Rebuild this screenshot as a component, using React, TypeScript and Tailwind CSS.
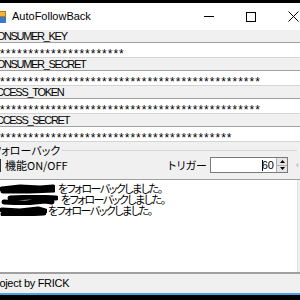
import React from "react";

const SANS = "font-['Liberation_Sans','Noto_Sans_CJK_JP',Arial,sans-serif]";
const JP = "font-['Noto_Sans_CJK_JP','Liberation_Sans',sans-serif] [font-feature-settings:'palt']";

function LabelRow({ text }: { text: string }) {
  return (
    <div className={`h-[12px] bg-[#f0f0f0] overflow-hidden leading-[12px] text-[11px] tracking-[-1.3px] text-black pl-[2px] ${SANS}`}>
      {text}
    </div>
  );
}

function ValueRow({ count }: { count: number }) {
  return (
    <div className="h-[16px] bg-white border-t border-b border-t-[#a0a0a0] border-b-[#d4d4d4] pl-[12px] overflow-hidden">
      <div className={`h-[14px] leading-[22px] text-[12px] tracking-[1px] text-black ${SANS}`}>
        {"*".repeat(count)}
      </div>
    </div>
  );
}

function Blob({ w, variant }: { w: number; variant: number }) {
  const paths = [
    "M2 5 L20 3 L40 4 L53 3 M3 7 L30 7 L54 6",
    "M10 3 L35 2 L56 3 M4 7 L25 8 L45 6 L52 7",
    "M2 4 L20 5 L38 3 L45 5 M3 8 L25 8 L44 7",
  ];
  return (
    <svg width={w} height={10} viewBox={`0 0 ${w} 10`} className="inline-block align-middle shrink-0">
      <path d={paths[variant]} stroke="#000" strokeWidth={5} strokeLinecap="round" strokeLinejoin="round" fill="none" />
    </svg>
  );
}

export default function App() {
  return (
    <div className="w-[300px] h-[300px] overflow-hidden bg-black">
      <div className="ml-[-12px] w-[326px] flex flex-col">
        <div className="h-[3px] bg-black" />
        {/* title bar */}
        <div className="h-[27px] bg-white flex items-center">
          <div className="ml-[6px] w-[12px] h-[12px] flex flex-col shrink-0">
            <div className="h-[6px] bg-[#f2b233] border border-[#b07a1a]" />
            <div className="h-[6px] bg-[#3a78c9]" />
          </div>
          <div className={`ml-[6px] text-[11px] text-black ${SANS}`}>AutoFollowBack</div>
          <div className="flex-1" />
          <div className="w-[42px] h-[27px] flex items-center justify-center shrink-0">
            <div className="w-[10px] h-px bg-black" />
          </div>
          <div className="w-[42px] h-[27px] flex items-center justify-center shrink-0">
            <div className="w-[10px] h-[10px] border border-black" />
          </div>
          <div className="w-[42px] h-[27px] flex items-center justify-center shrink-0">
            <svg width="11" height="11" viewBox="0 0 11 11">
              <path d="M0.5 0.5 L10.5 10.5 M10.5 0.5 L0.5 10.5" stroke="#000" strokeWidth="1" />
            </svg>
          </div>
        </div>

        <LabelRow text="CONSUMER_KEY" />
        <ValueRow count={22} />
        <LabelRow text="CONSUMER_SECRET" />
        <ValueRow count={46} />
        <LabelRow text="ACCESS_TOKEN" />
        <ValueRow count={46} />
        <LabelRow text="ACCESS_SECRET" />
        <ValueRow count={41} />

        {/* group box */}
        <div className="h-[37px] bg-[#f0f0f0] flex flex-col">
          <div className="h-[15px] flex items-center pt-[1px]">
            <div className={`ml-[4px] text-[11px] leading-[12px] text-black ${JP}`}>フォローバック</div>
            <div className="flex-1 h-px bg-[#d5d5d5] ml-[2px]" />
            <div className="w-[17px] shrink-0" />
          </div>
          <div className="h-[16px] flex items-center">
            <div className="w-[13px] h-[13px] border border-[#333] bg-white shrink-0" />
            <div className={`ml-[4px] text-[11px] leading-[12px] text-black whitespace-nowrap ${JP}`}>機能ON/OFF</div>
            <div className="flex-1" />
            <div className={`w-[42px] shrink-0 text-[11px] leading-[12px] text-black whitespace-nowrap ${JP}`}>トリガー</div>
            <div className="w-[78px] shrink-0 h-[16px] bg-white border border-[#7a7a7a] flex items-center">
              <div className={`flex-1 text-right pr-[2px] text-[11px] leading-[12px] text-black ${SANS}`}>
                <span className="inline-block w-px h-[11px] bg-black align-middle mr-[-1px]" />60
              </div>
              <div className="w-[11px] h-[14px] flex flex-col border-l border-[#adadad] shrink-0">
                <div className="flex-1 bg-[#e5e5e5] flex items-center justify-center border-b border-[#adadad]">
                  <svg width="5" height="3" viewBox="0 0 5 3"><path d="M0 3 L2.5 0 L5 3 Z" fill="#000" /></svg>
                </div>
                <div className="flex-1 bg-[#e5e5e5] flex items-center justify-center">
                  <svg width="5" height="3" viewBox="0 0 5 3"><path d="M0 0 L2.5 3 L5 0 Z" fill="#000" /></svg>
                </div>
              </div>
            </div>
            <div className="w-[8px] shrink-0" />
            <div className={`w-[4px] shrink-0 text-[9px] text-[#9a9a9a] leading-[10px] ${SANS}`}>‹</div>
            <div className="w-[14px] shrink-0" />
          </div>
        </div>

        {/* log box */}
        <div className="h-[93px] border-t border-[#a0a0a0] bg-white flex">
          <div className={`flex-1 pt-[3px] pl-[12px] text-[11px] leading-[11px] tracking-[-1.5px] text-black ${JP}`}>
            <div className="flex items-center h-[11px]">
              <Blob w={55} variant={0} />
              <span className="ml-[3px] whitespace-nowrap">をフォローバックしました。</span>
            </div>
            <div className="flex items-center h-[11px]">
              <Blob w={58} variant={1} />
              <span className="ml-[3px] whitespace-nowrap">をフォローバックしました。</span>
            </div>
            <div className="flex items-center h-[11px]">
              <Blob w={47} variant={2} />
              <span className="ml-[1px] whitespace-nowrap">をフォローバックしました。</span>
            </div>
          </div>
          <div className="w-[17px] bg-[#f0f0f0] border-l border-[#e3e3e3] shrink-0" />
        </div>

        {/* status bar */}
        <div className="h-[2px] bg-[#a0a0a0]" />
        <div className="h-[19px] bg-[#f0f0f0] flex items-center">
          <div className={`ml-[1px] text-[11px] tracking-[-0.3px] text-black ${SANS}`}>Project by FRICK</div>
        </div>
        <div className="h-[2px] bg-[#4aa3e8]" />
        <div className="h-[5px] bg-black" />
      </div>
    </div>
  );
}
